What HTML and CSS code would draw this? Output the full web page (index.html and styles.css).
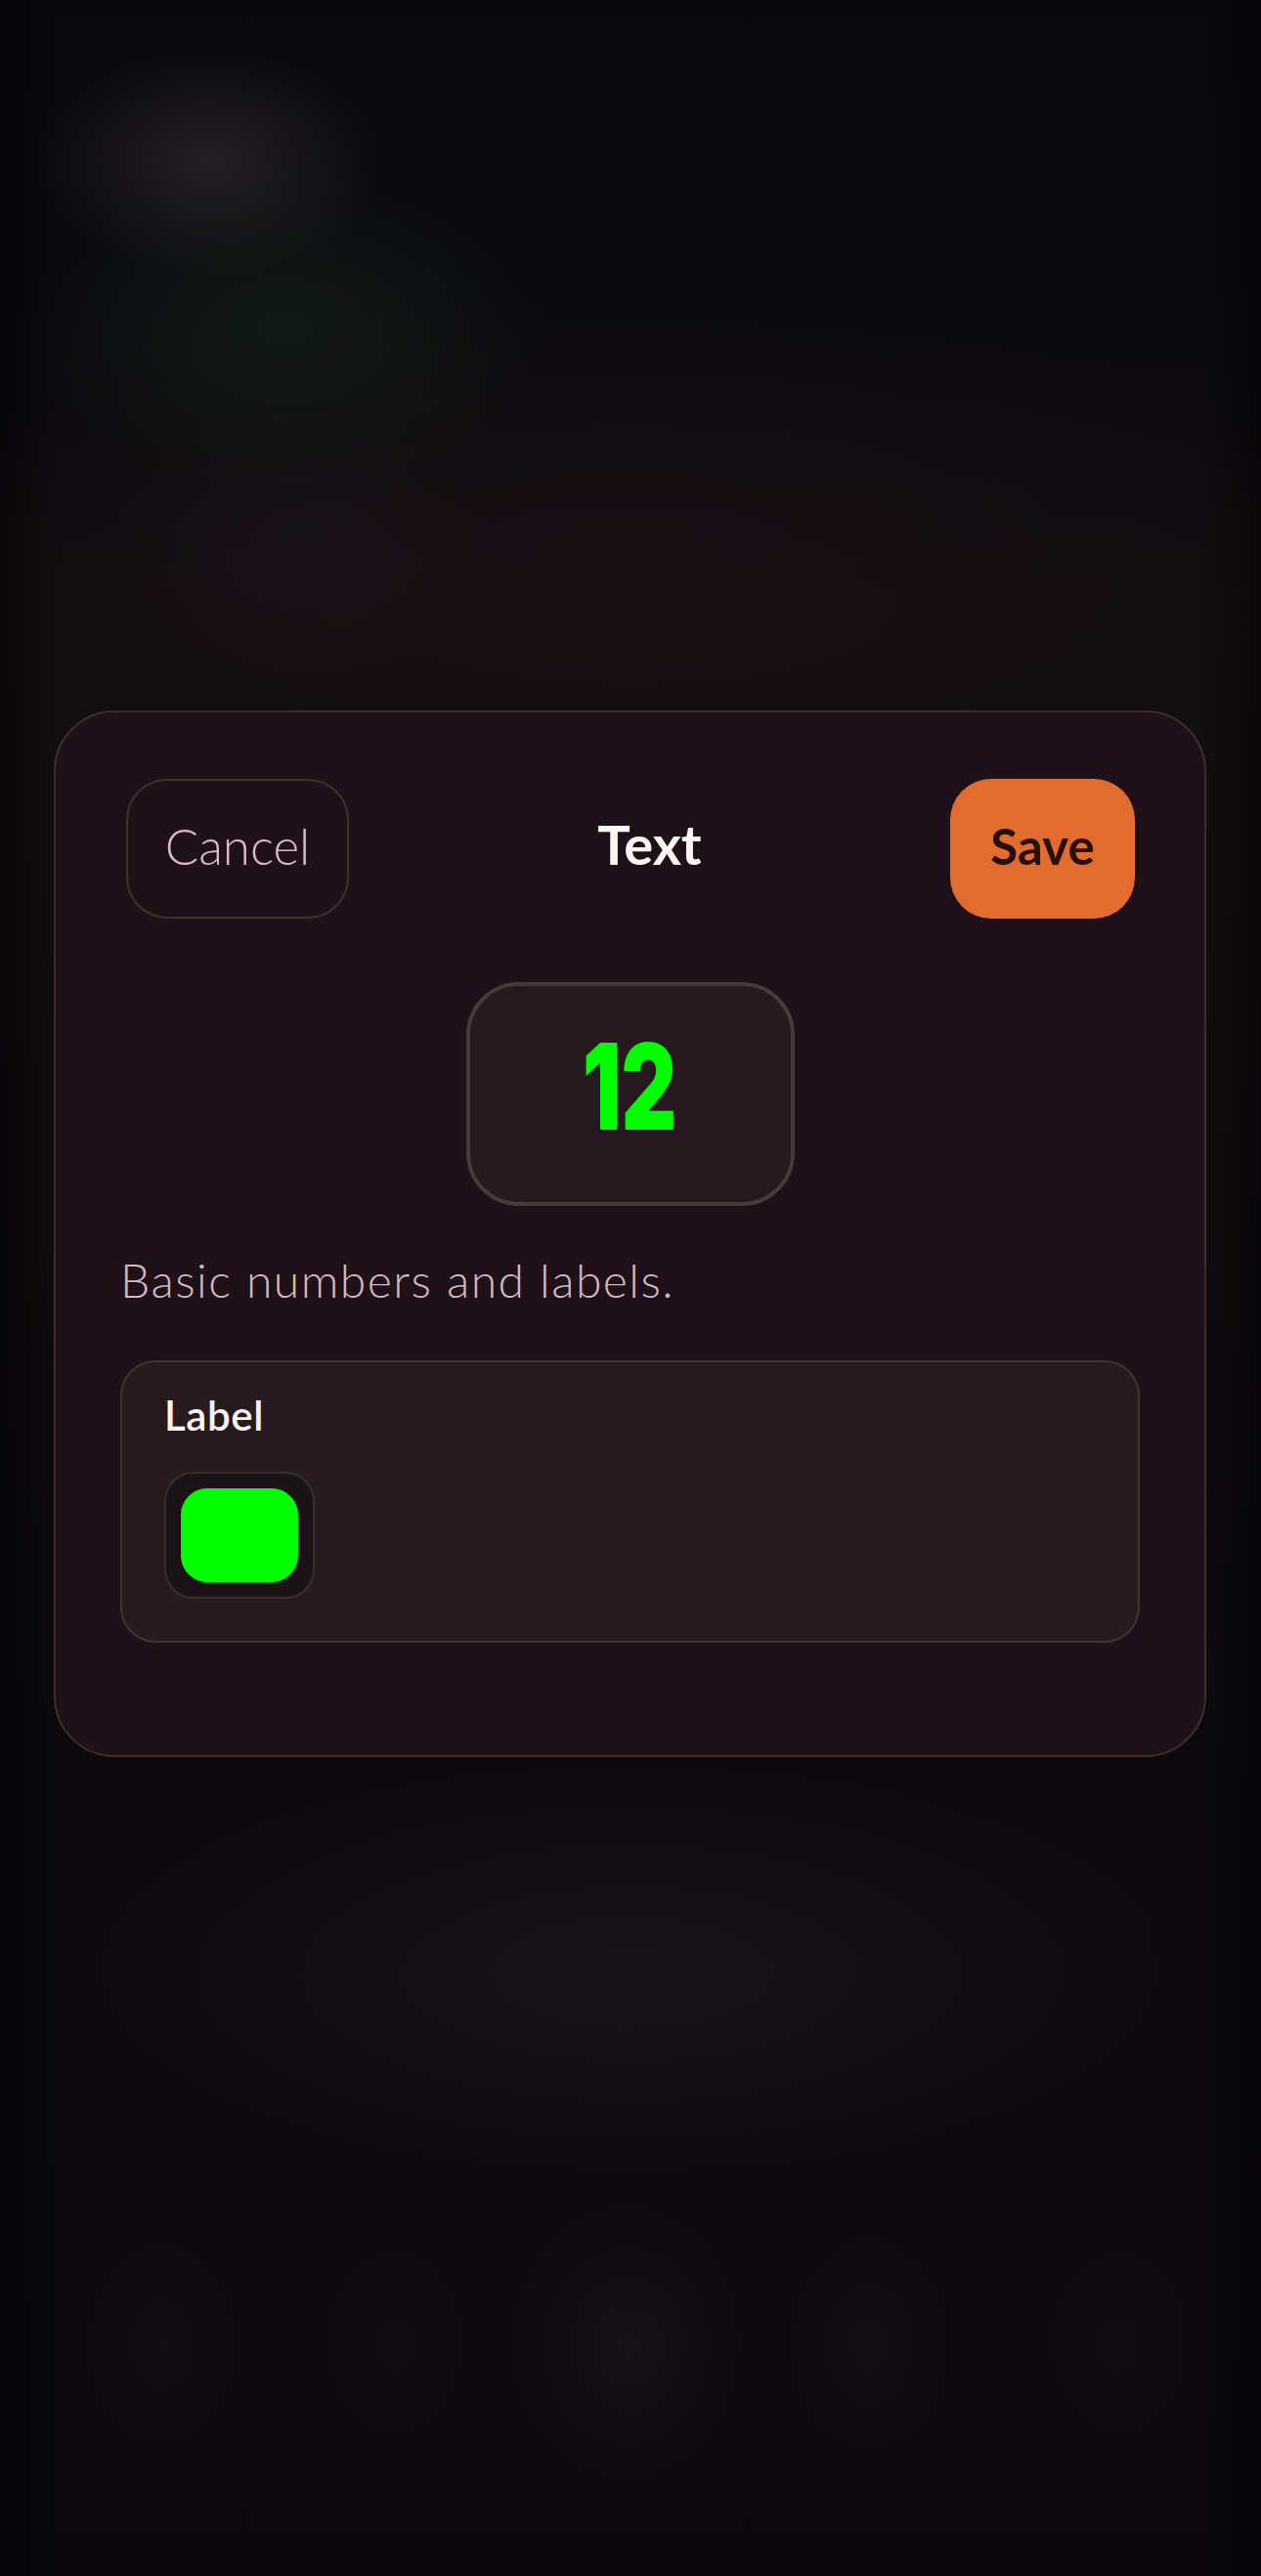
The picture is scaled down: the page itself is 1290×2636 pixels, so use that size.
FILE: index.html
```html
<!DOCTYPE html>
<html lang="en">
<head>
<meta charset="utf-8">
<title>Text</title>
<link rel="stylesheet" href="styles.css">
</head>
<body>
  <main class="screen">
    <section class="sheet">
      <header class="sheet-header">
        <button class="btn btn-cancel" type="button">Cancel</button>
        <h1 class="sheet-title">Text</h1>
        <button class="btn btn-save" type="button">Save</button>
      </header>

      <div class="preview">
        <span class="preview-value">12</span>
      </div>

      <p class="description">Basic numbers and labels.</p>

      <div class="field-group">
        <div class="field-label">Label</div>
        <div class="swatch">
          <div class="swatch-color"></div>
        </div>
      </div>
    </section>
  </main>
</body>
</html>
```

FILE: styles.css
```css
* {
  box-sizing: border-box;
}

html, body {
  margin: 0;
  padding: 0;
}

body {
  width: 1290px;
  height: 2636px;
  overflow: hidden;
  font-family: "Lato", "Noto Sans", "Liberation Sans", sans-serif;
  background:
    radial-gradient(ellipse 180px 120px at 215px 165px, rgba(44, 40, 43, 0.75), rgba(44, 40, 43, 0)),
    radial-gradient(ellipse 270px 170px at 290px 335px, rgba(20, 31, 25, 0.75), rgba(20, 31, 25, 0)),
    radial-gradient(ellipse 200px 150px at 310px 560px, rgba(28, 22, 28, 0.55), rgba(28, 22, 28, 0)),
    radial-gradient(ellipse 760px 280px at 645px 580px, rgba(24, 16, 20, 0.8), rgba(24, 16, 20, 0)),
    radial-gradient(ellipse 600px 230px at 645px 2020px, rgba(26, 22, 26, 0.85), rgba(26, 22, 26, 0)),
    radial-gradient(ellipse 110px 150px at 165px 2400px, rgba(22, 17, 22, 0.6), rgba(22, 17, 22, 0)),
    radial-gradient(ellipse 110px 150px at 403px 2400px, rgba(22, 17, 22, 0.5), rgba(22, 17, 22, 0)),
    radial-gradient(ellipse 140px 170px at 642px 2400px, rgba(26, 21, 26, 0.7), rgba(26, 21, 26, 0)),
    radial-gradient(ellipse 110px 150px at 889px 2400px, rgba(24, 18, 24, 0.6), rgba(24, 18, 24, 0)),
    radial-gradient(ellipse 110px 150px at 1143px 2400px, rgba(22, 17, 22, 0.5), rgba(22, 17, 22, 0)),
    linear-gradient(90deg, rgba(4, 3, 5, 0.6) 0, rgba(4, 3, 5, 0) 60px, rgba(4, 3, 5, 0) 1230px, rgba(4, 3, 5, 0.6) 1290px),
    linear-gradient(180deg, #0a090d 0, #0b0a0e 300px, #120d10 600px, #130e11 800px, #0c0a0d 1800px, #0b090d 2636px);
}

.screen {
  padding: 727px 56px 0 55px;
}

.sheet {
  background: #1e1218;
  border: 2px solid #3c2e33;
  border-radius: 62px;
  padding: 68px 66px 115px;
}

/* Header */
.sheet-header {
  display: flex;
  align-items: center;
  height: 143px;
  padding: 0 5px 0 6px;
}

.btn {
  height: 143px;
  display: flex;
  align-items: center;
  justify-content: center;
  padding: 0 0 7px;
  border-radius: 42px;
  font-family: inherit;
  font-size: 51px;
  cursor: pointer;
}

.btn-cancel {
  width: 228px;
  background: transparent;
  border: 2px solid #3e3136;
  color: #d9b9c6;
  font-weight: 300;
}

.btn-save {
  width: 189px;
  background: #e06c2f;
  border: none;
  color: #2a0f08;
  font-weight: 700;
}

.sheet-title {
  flex: 1;
  margin: 0;
  padding-bottom: 10px;
  text-align: center;
  font-size: 56px;
  font-weight: 700;
  color: #fff6f3;
}

/* Preview */
.preview {
  width: 336px;
  height: 229px;
  margin: 65px auto 0;
  background: #251b1f;
  border: 4px solid #463a3e;
  border-radius: 54px;
  display: flex;
  align-items: center;
  justify-content: center;
  padding-bottom: 16px;
}

.preview-value {
  display: inline-block;
  font-family: "Inter", "Roboto", sans-serif;
  font-weight: 900;
  font-size: 122px;
  line-height: 1;
  color: #00ff00;
  transform: scaleX(0.72);
}

/* Description */
.description {
  margin: 47px 0 0;
  font-size: 48px;
  line-height: 58px;
  font-weight: 300;
  letter-spacing: 1.5px;
  color: #d6b7c4;
}

/* Field group */
.field-group {
  margin-top: 53px;
  background: #261c20;
  border: 2px solid #403337;
  border-radius: 36px;
  padding: 29px 43px 43px;
}

.field-label {
  font-size: 42px;
  line-height: 50px;
  font-weight: 600;
  letter-spacing: 0.6px;
  color: #fff3f3;
}

.swatch {
  margin-top: 33px;
  width: 154px;
  padding: 15px;
  background: #1b1417;
  border: 2px solid #3a2d31;
  border-radius: 30px;
}

.swatch-color {
  width: 120px;
  height: 96px;
  background: #00ff00;
  border-radius: 27px;
}
```
